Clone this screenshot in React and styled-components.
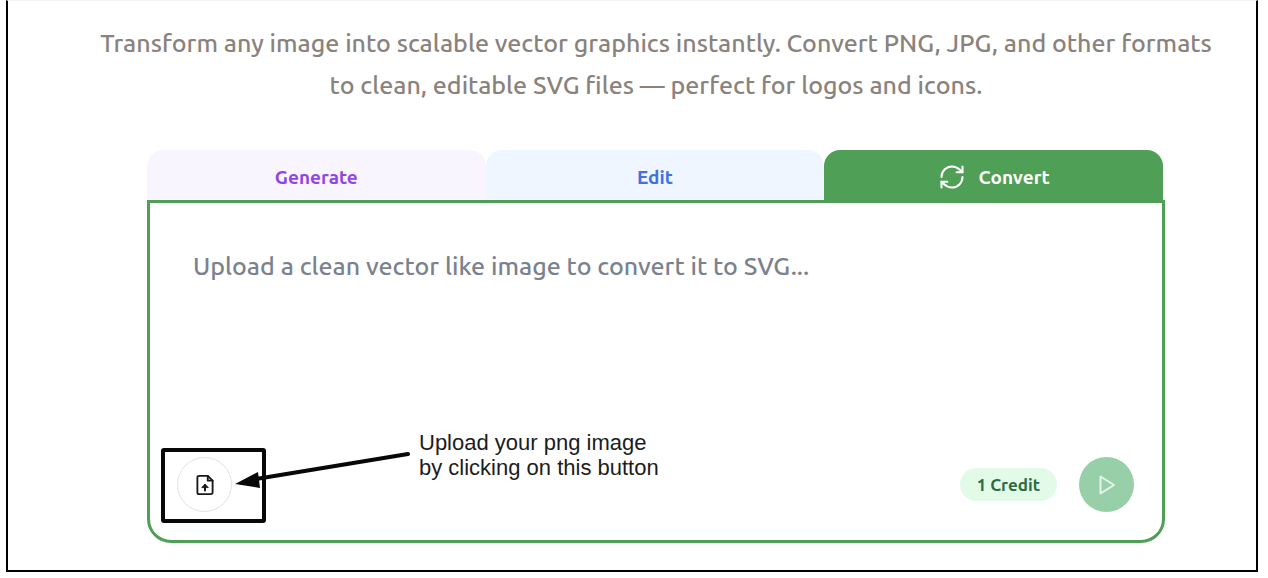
import React, { useState } from "react";
import styled, { createGlobalStyle } from "styled-components";
import { RefreshCw } from "lucide-react";

const GlobalStyle = createGlobalStyle`
  * {
    box-sizing: border-box;
  }

  body {
    margin: 0;
    background: white;
    font-family: Ubuntu, "Noto Sans", sans-serif;
  }

  button,
  textarea {
    font-family: inherit;
  }
`;

const StyledPage = styled.div`
  padding: 0 10px 6px 6px;
`;

const StyledFrame = styled.main`
  padding: 21px 0 27px 48px;

  border: 2px solid black;
  border-top: 1px solid #f3f3f3;
`;

const StyledIntro = styled.p`
  max-width: 1140px;
  margin: 0 auto 44px;

  color: #8a827d;
  font-size: 25px;
  font-weight: 500;
  line-height: 42px;
  text-align: center;
`;

const StyledConverter = styled.section`
  max-width: 1018px;
  margin: 0 auto;
`;

const StyledTabs = styled.div`
  display: grid;
  grid-template-columns: repeat(3, 1fr);

  padding-right: 2px;
`;

const StyledTab = styled.button`
  display: flex;
  justify-content: center;
  align-items: center;
  gap: 13px;

  height: 50px;
  padding: 4px 0 0;

  border: none;
  border-radius: 16px 16px 0 0;

  color: ${props => props.$color};
  background: ${props => props.$background};

  font-size: 19px;
  font-weight: 700;
  cursor: pointer;
`;

const StyledPanel = styled.div`
  display: flex;
  flex-direction: column;

  position: relative;

  border: 3px solid #4fa056;
  border-radius: 0 0 24px 24px;
`;

const StyledPrompt = styled.textarea`
  display: block;

  width: 100%;
  height: 254px;
  padding: 43px 43px 0;

  border: none;
  outline: none;
  resize: none;

  color: #374151;
  background: transparent;

  font-size: 25px;
  font-weight: 500;
  line-height: 40px;

  &::placeholder {
    color: #7b818d;
    opacity: 1;
  }
`;

const StyledActions = styled.div`
  display: flex;
  align-items: center;
  gap: 22px;

  padding: 0 28px 28px 27px;
`;

const StyledRoundBtn = styled.button`
  display: flex;
  justify-content: center;
  align-items: center;

  width: 55px;
  height: 55px;
  padding: 0;

  border: ${props => props.$border || "none"};
  border-radius: 50%;

  color: ${props => props.$color};
  background: ${props => props.$background};
  cursor: pointer;
`;

const StyledCredit = styled.span`
  margin-left: auto;
  padding: 0 17px;

  border-radius: 17px;

  color: #2f6b40;
  background: #e1fbe8;

  font-size: 17px;
  font-weight: 700;
  line-height: 33px;
`;

const StyledHighlight = styled.div`
  position: absolute;
  left: 11px;
  bottom: 17px;

  width: 105px;
  height: 75px;

  border: 4px solid #080808;
  border-radius: 3px;
  pointer-events: none;
`;

const StyledArrow = styled.svg`
  position: absolute;
  left: 82px;
  bottom: 46px;

  pointer-events: none;
`;

const StyledNote = styled.p`
  position: absolute;
  left: 269px;
  bottom: 60px;

  margin: 0;

  color: #1c1c1c;

  font-family: "Liberation Sans", Arial, sans-serif;
  font-size: 22px;
  line-height: 25px;
`;

const FileUploadIcon = () => (
  <svg
    width="22"
    height="22"
    viewBox="0 0 24 24"
    fill="none"
    stroke="currentColor"
    strokeWidth="2"
    strokeLinecap="round"
    strokeLinejoin="round"
  >
    <path d="M15 2H5.500a1.800 1.800 0 0 0-1.800 1.800v16.400a1.800 1.800 0 0 0 1.800 1.800h13a1.800 1.800 0 0 0 1.800-1.800V7.300Z" />
    <path d="M15 2v5.300h5.300" />
    <path d="M12 12v6" strokeWidth="2.200" />
    <path d="m15.300 14.500-3.300-3.300-3.300 3.300Z" fill="currentColor" strokeWidth="1" />
  </svg>
);

const PlayIcon = () => (
  <svg
    width="20"
    height="22"
    viewBox="0 0 20 22"
    fill="none"
    stroke="currentColor"
    strokeWidth="2"
    strokeLinejoin="round"
  >
    <path d="M3.500 2.500v17L17 11Z" />
  </svg>
);

const TABS = [
  { name: "Generate", color: "#9046e2", background: "#f8f5ff" },
  { name: "Edit", color: "#4270e0", background: "#eff6ff" },
  { name: "Convert", color: "white", background: "#4fa056", icon: true }
];

const App = () => {
  const [prompt, setPrompt] = useState("");

  return (
    <StyledPage>
      <GlobalStyle />
      <StyledFrame>
        <StyledIntro>
          Transform any image into scalable vector graphics instantly. Convert
          PNG, JPG, and other formats
          <br />
          to clean, editable SVG files — perfect for logos and icons.
        </StyledIntro>
        <StyledConverter>
          <StyledTabs role="tablist">
            {TABS.map(tab => (
              <StyledTab
                key={tab.name}
                role="tab"
                aria-selected={tab.name === "Convert"}
                $color={tab.color}
                $background={tab.background}
              >
                {tab.icon && <RefreshCw size={28} strokeWidth={1.75} />}
                {tab.name}
              </StyledTab>
            ))}
          </StyledTabs>
          <StyledPanel>
            <StyledPrompt
              aria-label="Image to convert"
              placeholder="Upload a clean vector like image to convert it to SVG..."
              value={prompt}
              onChange={e => setPrompt(e.target.value)}
            />
            <StyledActions>
              <StyledRoundBtn
                aria-label="Upload image"
                $border="1px solid #e2e2e4"
                $color="#18181b"
                $background="white"
              >
                <FileUploadIcon />
              </StyledRoundBtn>
              <StyledCredit>1 Credit</StyledCredit>
              <StyledRoundBtn
                aria-label="Convert"
                $color="#e6f5ea"
                $background="#96cfa8"
              >
                <PlayIcon />
              </StyledRoundBtn>
            </StyledActions>
            <StyledHighlight />
            <StyledArrow width="180" height="44" viewBox="0 0 180 44">
              <path
                d="M24 29 176 4"
                stroke="#080808"
                strokeWidth="4"
                strokeLinecap="round"
              />
              <path d="M3 34 26 22l2 16Z" fill="#080808" />
            </StyledArrow>
            <StyledNote>
              Upload your png image
              <br />
              by clicking on this button
            </StyledNote>
          </StyledPanel>
        </StyledConverter>
      </StyledFrame>
    </StyledPage>
  );
};

export default App;
